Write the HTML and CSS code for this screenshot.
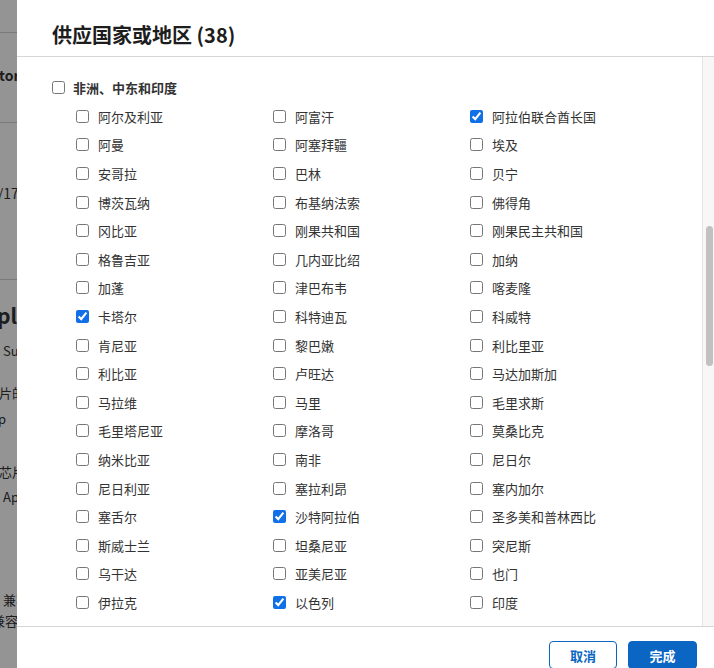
FILE: index.html
```html
<!DOCTYPE html>
<html lang="zh-CN">
<head>
<meta charset="utf-8">
<title>供应国家或地区</title>
<link rel="stylesheet" href="styles.css">
</head>
<body>
<div class="page">
  <div class="bg-rule r1"></div>
  <div class="bg-line t-tor bold">tor</div>
  <div class="bg-rule r2"></div>
  <div class="bg-line t-num">1/175</div>
  <div class="bg-rule r3"></div>
  <div class="bg-line t-ple big">ple</div>
  <div class="bg-line t-su">Su</div>
  <div class="bg-line t-pian">片的</div>
  <div class="bg-line t-p">pp</div>
  <div class="bg-line t-xin">芯片</div>
  <div class="bg-line t-ap">Ap</div>
  <div class="bg-line t-jian1">兼容</div>
  <div class="bg-line t-jian2">兼容</div>
</div>

<div class="overlay"></div>

<div class="modal" role="dialog" aria-label="供应国家或地区">
  <div class="modal-header">
    <h2 class="modal-title">供应国家或地区 (38)</h2>
  </div>
  <div class="modal-body">
    <div class="scroll-content">
      <label class="group-row"><input type="checkbox"><span>非洲、中东和印度</span></label>
      <div class="country-grid">
        <label class="item"><input type="checkbox"><span>阿尔及利亚</span></label>
        <label class="item"><input type="checkbox"><span>阿富汗</span></label>
        <label class="item"><input type="checkbox" checked><span>阿拉伯联合酋长国</span></label>
        <label class="item"><input type="checkbox"><span>阿曼</span></label>
        <label class="item"><input type="checkbox"><span>阿塞拜疆</span></label>
        <label class="item"><input type="checkbox"><span>埃及</span></label>
        <label class="item"><input type="checkbox"><span>安哥拉</span></label>
        <label class="item"><input type="checkbox"><span>巴林</span></label>
        <label class="item"><input type="checkbox"><span>贝宁</span></label>
        <label class="item"><input type="checkbox"><span>博茨瓦纳</span></label>
        <label class="item"><input type="checkbox"><span>布基纳法索</span></label>
        <label class="item"><input type="checkbox"><span>佛得角</span></label>
        <label class="item"><input type="checkbox"><span>冈比亚</span></label>
        <label class="item"><input type="checkbox"><span>刚果共和国</span></label>
        <label class="item"><input type="checkbox"><span>刚果民主共和国</span></label>
        <label class="item"><input type="checkbox"><span>格鲁吉亚</span></label>
        <label class="item"><input type="checkbox"><span>几内亚比绍</span></label>
        <label class="item"><input type="checkbox"><span>加纳</span></label>
        <label class="item"><input type="checkbox"><span>加蓬</span></label>
        <label class="item"><input type="checkbox"><span>津巴布韦</span></label>
        <label class="item"><input type="checkbox"><span>喀麦隆</span></label>
        <label class="item"><input type="checkbox" checked><span>卡塔尔</span></label>
        <label class="item"><input type="checkbox"><span>科特迪瓦</span></label>
        <label class="item"><input type="checkbox"><span>科威特</span></label>
        <label class="item"><input type="checkbox"><span>肯尼亚</span></label>
        <label class="item"><input type="checkbox"><span>黎巴嫩</span></label>
        <label class="item"><input type="checkbox"><span>利比里亚</span></label>
        <label class="item"><input type="checkbox"><span>利比亚</span></label>
        <label class="item"><input type="checkbox"><span>卢旺达</span></label>
        <label class="item"><input type="checkbox"><span>马达加斯加</span></label>
        <label class="item"><input type="checkbox"><span>马拉维</span></label>
        <label class="item"><input type="checkbox"><span>马里</span></label>
        <label class="item"><input type="checkbox"><span>毛里求斯</span></label>
        <label class="item"><input type="checkbox"><span>毛里塔尼亚</span></label>
        <label class="item"><input type="checkbox"><span>摩洛哥</span></label>
        <label class="item"><input type="checkbox"><span>莫桑比克</span></label>
        <label class="item"><input type="checkbox"><span>纳米比亚</span></label>
        <label class="item"><input type="checkbox"><span>南非</span></label>
        <label class="item"><input type="checkbox"><span>尼日尔</span></label>
        <label class="item"><input type="checkbox"><span>尼日利亚</span></label>
        <label class="item"><input type="checkbox"><span>塞拉利昂</span></label>
        <label class="item"><input type="checkbox"><span>塞内加尔</span></label>
        <label class="item"><input type="checkbox"><span>塞舌尔</span></label>
        <label class="item"><input type="checkbox" checked><span>沙特阿拉伯</span></label>
        <label class="item"><input type="checkbox"><span>圣多美和普林西比</span></label>
        <label class="item"><input type="checkbox"><span>斯威士兰</span></label>
        <label class="item"><input type="checkbox"><span>坦桑尼亚</span></label>
        <label class="item"><input type="checkbox"><span>突尼斯</span></label>
        <label class="item"><input type="checkbox"><span>乌干达</span></label>
        <label class="item"><input type="checkbox"><span>亚美尼亚</span></label>
        <label class="item"><input type="checkbox"><span>也门</span></label>
        <label class="item"><input type="checkbox"><span>伊拉克</span></label>
        <label class="item"><input type="checkbox" checked><span>以色列</span></label>
        <label class="item"><input type="checkbox"><span>印度</span></label>
      </div>
    </div>
    <div class="scroll-track"><div class="scroll-thumb"></div></div>
  </div>
  <div class="modal-footer">
    <button class="btn btn-secondary" type="button">取消</button>
    <button class="btn btn-primary" type="button">完成</button>
  </div>
</div>
</body>
</html>
```

FILE: styles.css
```css
html, body {
  margin: 0;
  padding: 0;
  height: 100%;
  overflow: hidden;
}

body {
  background: #ffffff;
  font-family: "Noto Sans CJK SC", "Noto Sans", sans-serif;
  color: #333333;
}

/* underlying page (mostly covered by the dialog) */
.page {
  display: flex;
  flex-direction: column;
  width: 60px;
}

.bg-rule {
  height: 1px;
  background: #d2d2d2;
  width: 60px;
}

.r1 { margin-top: 32px; }
.r2 { margin-top: 37px; }
.r3 { margin-top: 76px; }

.bg-line {
  font-size: 14px;
  line-height: 20px;
  height: 20px;
  white-space: nowrap;
  color: #333333;
}

.bold { font-weight: 700; }
.big { font-size: 21px; line-height: 24px; height: 24px; font-weight: 700; }

.t-tor { margin-top: 32px; margin-left: -1px; }
.t-num { margin-top: 60px; margin-left: -10px; }
.t-ple { margin-top: 23px; margin-left: -3px; }
.t-su { margin-top: 14px; margin-left: 3px; font-size: 13px; }
.t-pian { margin-top: 22px; margin-left: -1px; font-size: 13px; }
.t-p { margin-top: 6px; margin-left: -10px; font-size: 13px; }
.t-xin { margin-top: 33px; margin-left: -1px; font-size: 13px; }
.t-ap { margin-top: 5px; margin-left: 3px; font-size: 13px; }
.t-jian1 { margin-top: 83px; margin-left: 3px; font-size: 13px; }
.t-jian2 { margin-top: 1px; margin-left: -8px; font-size: 13px; }

.overlay {
  position: fixed;
  inset: 0;
  background: rgba(0, 0, 0, 0.42);
}

/* dialog */
.modal {
  position: fixed;
  top: 0;
  left: 17px;
  right: 0;
  height: 698px;
  background: #ffffff;
  display: flex;
  flex-direction: column;
}

.modal-header {
  height: 57px;
  box-sizing: border-box;
  padding: 21px 35px 0;
  border-bottom: 1px solid #d6d6d6;
  flex: none;
}

.modal-title {
  margin: 0;
  font-size: 20px;
  line-height: 28px;
  font-weight: 700;
  color: #1d1d1d;
}

.modal-body {
  flex: 1;
  display: flex;
  min-height: 0;
}

.scroll-content {
  flex: 1;
  overflow: hidden;
  padding: 15px 0 0 35px;
}

.group-row {
  display: flex;
  align-items: center;
  gap: 8px;
  height: 30px;
  font-size: 13px;
  font-weight: 700;
  color: #333333;
}

.country-grid {
  margin-left: 24px;
  display: grid;
  grid-template-columns: repeat(3, 197px);
  grid-auto-rows: 28.6px;
}

.item {
  display: flex;
  align-items: center;
  gap: 9px;
  font-size: 13px;
  color: #333333;
  white-space: nowrap;
}

input[type="checkbox"] {
  width: 13px;
  height: 13px;
  margin: 0;
  flex: none;
  accent-color: #1170e8;
}

.scroll-track {
  width: 11px;
  flex: none;
  background: #f7f7f7;
  border-left: 1px solid #e4e4e4;
  padding-top: 169px;
  box-sizing: content-box;
}

.scroll-thumb {
  margin-left: 3px;
  width: 7px;
  height: 140px;
  border-radius: 4px;
  background: #c1c1c1;
}

.modal-footer {
  flex: none;
  height: 72px;
  box-sizing: border-box;
  border-top: 1px solid #d6d6d6;
  padding: 14px 17px 0 0;
  display: flex;
  justify-content: flex-end;
  align-items: flex-start;
  gap: 11px;
}

.btn {
  height: 28px;
  border-radius: 4px;
  font-family: "Noto Sans CJK SC", "Noto Sans", sans-serif;
  font-size: 13px;
  font-weight: 700;
  cursor: pointer;
  padding: 0;
  box-sizing: border-box;
}

.btn-secondary {
  width: 68px;
  background: #ffffff;
  color: #0a66c2;
  border: 1px solid #0a66c2;
}

.btn-primary {
  width: 69px;
  background: #0a66c2;
  color: #ffffff;
  border: 1px solid #0a66c2;
}
```
